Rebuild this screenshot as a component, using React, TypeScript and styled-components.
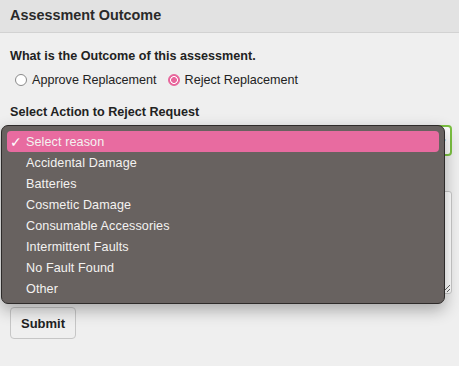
import React from "react";
import styled, { createGlobalStyle } from "styled-components";

const reasons = [
	"Select reason",
	"Accidental Damage",
	"Batteries",
	"Cosmetic Damage",
	"Consumable Accessories",
	"Intermittent Faults",
	"No Fault Found",
	"Other",
];

const App = () => {
	return (
		<Page>
			<GlobalStyle />
			<PanelHeader>Assessment Outcome</PanelHeader>
			<PanelBody>
				<FieldLabel>What is the Outcome of this assessment.</FieldLabel>
				<RadioRow>
					<RadioOption>
						<RadioDot />
						Approve Replacement
					</RadioOption>
					<RadioOption>
						<RadioDot $checked />
						Reject Replacement
					</RadioOption>
				</RadioRow>
				<FieldLabel>Select Action to Reject Request</FieldLabel>
				<SelectWrap>
					<SelectBox>
						<span>Select reason</span>
						<SelectArrow>▾</SelectArrow>
					</SelectBox>
					<Menu>
						{reasons.map((r, i) => (
							<MenuRow key={r} $active={i === 0}>
								<Check>{i === 0 ? "✓" : ""}</Check>
								{r}
							</MenuRow>
						))}
					</Menu>
				</SelectWrap>
				<FieldLabel $gap={14}>Comments</FieldLabel>
				<Notes />
				<SubmitButton>Submit</SubmitButton>
			</PanelBody>
		</Page>
	);
};

const GlobalStyle = createGlobalStyle`
	html, body {
		margin: 0;
		padding: 0;
		background: #efefef;
	}
	* {
		box-sizing: border-box;
	}
`;

const Page = styled.div`
	width: 459px;
	height: 366px;
	background: #efefef;
	font-family: "Liberation Sans", Arial, sans-serif;
	color: #222;
	overflow: hidden;
`;

const PanelHeader = styled.div`
	height: 33px;
	display: flex;
	align-items: center;
	padding: 0 10px 2px;
	background: #e2e2e2;
	border-bottom: 1px solid #d2d2d2;
	font-size: 14.4px;
	font-weight: bold;
	color: #2a2a2a;
`;

const PanelBody = styled.div`
	display: flex;
	flex-direction: column;
	align-items: flex-start;
	padding: 15px 7px 0 10px;
`;

const FieldLabel = styled.div<{ $gap?: number }>`
	margin-top: ${(p) => p.$gap ?? 0}px;
	font-size: 12.6px;
	font-weight: bold;
	color: #222;
	line-height: 16px;
`;

const RadioRow = styled.div`
	display: flex;
	gap: 11px;
	margin: 8px 0 16px 5px;
`;

const RadioOption = styled.label`
	display: flex;
	align-items: center;
	gap: 5px;
	font-size: 12.6px;
	color: #222;
	line-height: 16px;
`;

const RadioDot = styled.span<{ $checked?: boolean }>`
	width: 12px;
	height: 12px;
	border-radius: 50%;
	border: 1px solid ${(p) => (p.$checked ? "#e8669c" : "#8a8a8a")};
	background: ${(p) =>
		p.$checked
			? "radial-gradient(circle, #e8669c 0 2.6px, #ffffff 3.2px 3.6px, #e8669c 4.2px)"
			: "#ffffff"};
`;

const SelectWrap = styled.div`
	position: relative;
	width: 100%;
	margin-top: 5px;
`;

const SelectBox = styled.div`
	height: 31px;
	width: 100%;
	display: flex;
	align-items: center;
	justify-content: space-between;
	padding: 0 4px 0 8px;
	background: #fff;
	border: 2px solid #7cc242;
	border-radius: 4px;
	font-size: 13px;
`;

const SelectArrow = styled.span`
	font-size: 9px;
	color: #555;
`;

const Menu = styled.div`
	position: absolute;
	top: 0;
	left: -9px;
	width: 444px;
	padding: 5px 5px 4px;
	background: #686260;
	border: 1px solid #2e2b2a;
	border-radius: 7px;
	box-shadow: 0 6px 16px rgba(0, 0, 0, 0.3);
	font-family: "Liberation Sans", Arial, sans-serif;
	z-index: 2;
`;

const MenuRow = styled.div<{ $active?: boolean }>`
	height: 21px;
	display: flex;
	align-items: center;
	padding-left: 3px;
	border-radius: 4px;
	background: ${(p) => (p.$active ? "#e86ba0" : "transparent")};
	color: #f4f2f1;
	font-size: 12.6px;
	letter-spacing: 0.1px;
`;

const Check = styled.span`
	width: 16px;
	font-family: "DejaVu Sans", sans-serif;
	font-size: 14px;
	color: #fff;
`;

const Notes = styled.textarea`
	margin-top: 5px;
	width: 100%;
	height: 103px;
	border: 1px solid #c8c8c8;
	border-radius: 3px;
	background: #fff;
	resize: vertical;
`;

const SubmitButton = styled.button`
	margin-top: 13px;
	width: 66px;
	height: 32px;
	background: #efefef;
	border: 1px solid #c6c6c6;
	border-radius: 4px;
	font-family: "Liberation Sans", Arial, sans-serif;
	font-size: 13px;
	font-weight: bold;
	color: #222;
`;

export default App;
